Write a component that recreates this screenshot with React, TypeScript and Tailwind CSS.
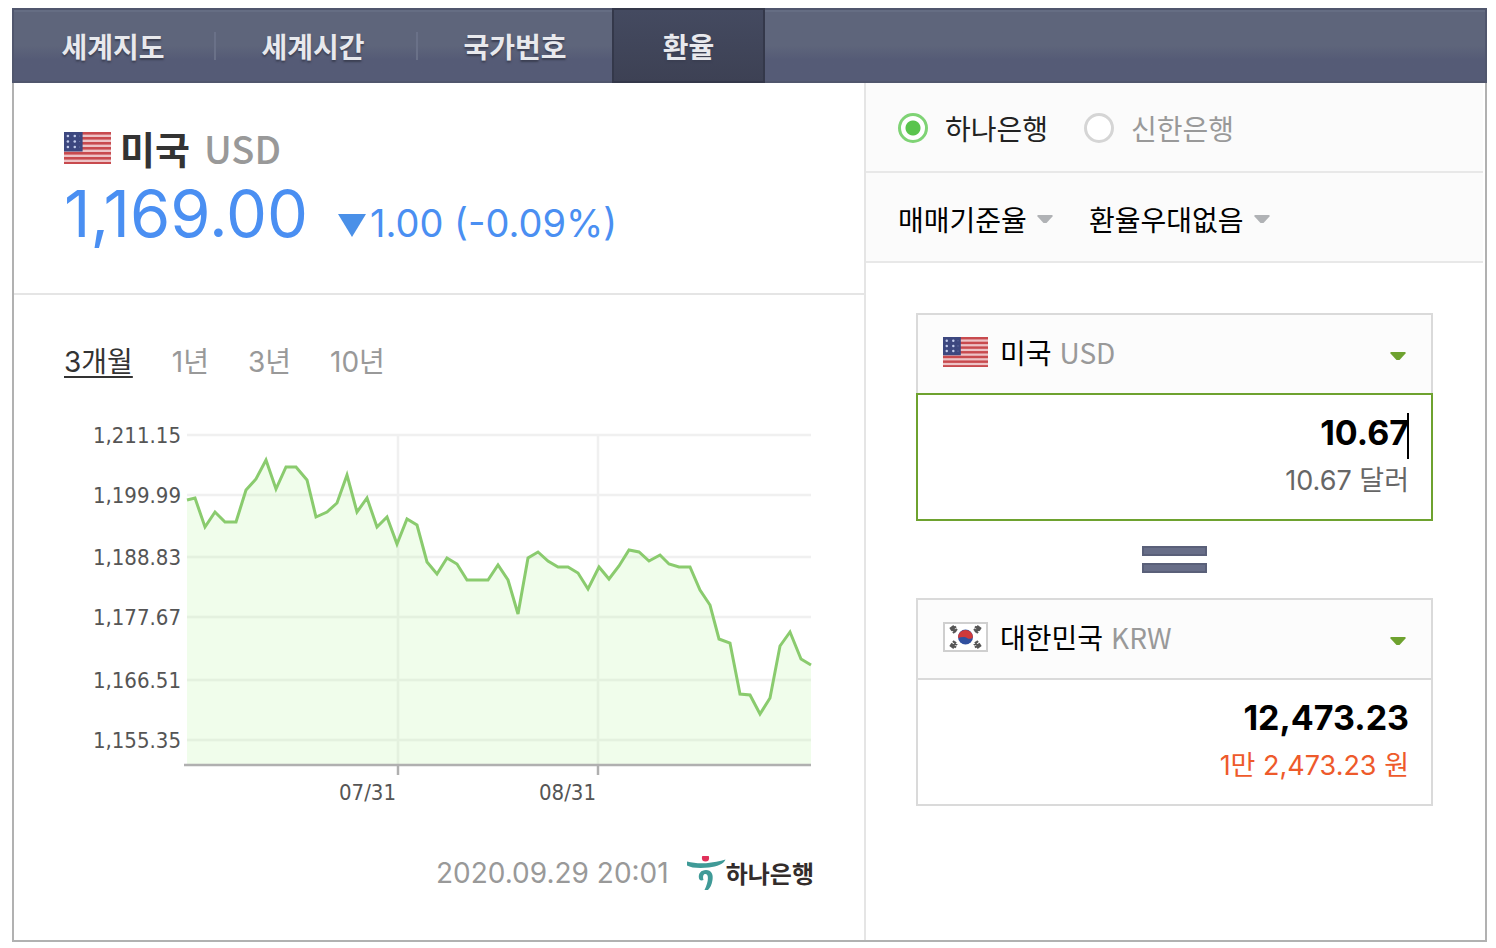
import { useState } from 'react'
import clsx from 'clsx'

interface CurrencyBoxProps {
  id: string
  name: string
  code: string
  flag: React.ReactNode
  value: string
  reading: string
  active?: boolean
  onChange: (value: string) => void
}

const tabs = [
  { label: '세계지도', className: 'w-[202px] pr-1' },
  { label: '세계시간', className: 'w-[202px] pr-2' },
  { label: '국가번호', className: 'w-[194px]' },
  { label: '환율', className: 'w-[153px]', active: true },
]

const periods = ['3개월', '1년', '3년', '10년']

const yLabels = [
  { y: 15, text: '1,211.15' },
  { y: 75, text: '1,199.99' },
  { y: 137, text: '1,188.83' },
  { y: 197, text: '1,177.67' },
  { y: 260, text: '1,166.51' },
  { y: 320, text: '1,155.35' },
]

const xLabels = [
  { x: 334, text: '07/31' },
  { x: 534, text: '08/31' },
]

const linePoints =
  '123,80 131,78 141,107 151,92 161,102 172,102 182,70 192,59 202,40 212,69 222,47 232,47 243,60 252,97 263,92 273,83 283,55 293,92 303,78 313,107 323,97 333,124 343,99 353,105 363,142 373,154 383,138 393,144 403,160 424,160 434,145 444,160 454,194 464,138 474,132 484,141 494,147 504,147 514,153 524,169 535,147 545,159 555,146 565,130 575,132 585,141 596,135 605,144 615,147 626,147 636,170 646,185 655,219 666,223 676,274 686,275 696,294 706,278 716,226 726,212 737,239 747,245'

function UsaFlag({ className }: { className?: string }) {
  return (
    <svg viewBox="0 0 48 32" preserveAspectRatio="none" className={className} aria-hidden="true">
      <rect width="48" height="32" fill="#edc3c6" />
      {[0, 5, 10, 15, 20, 25, 30].map((y) => (
        <rect key={y} y={y} width="48" height="2.6" fill="#c84a4e" />
      ))}
      <rect width="19" height="19.5" fill="#3c477f" />
      {[4, 9.5, 15].map((y) => (
        <g key={y} fill="#c3cdec">
          <circle cx="4" cy={y} r="1.3" />
          <circle cx="11" cy={y} r="1.3" />
          <circle cx="16" cy={y} r="0.6" fill="#6f7bad" />
        </g>
      ))}
    </svg>
  )
}

function KoreaFlag({ className }: { className?: string }) {
  return (
    <svg viewBox="0 0 45 30" className={className} aria-hidden="true">
      <rect x="1" y="1" width="43" height="28" fill="#fff" stroke="#cfcfcf" strokeWidth="2" />
      <circle cx="22.5" cy="15" r="7.5" fill="#31509f" />
      <path d="M15 16a7.5 7.500 0 1 1 15-1c-1 2-4 2.500-6 1s-6-1-9 0z" fill="#d0393b" />
      <g stroke="#555" strokeWidth="2.200">
        <path d="M7 7l4-3M8 8.500l5-4M10 11l4-4M8 5l5 5" />
        <path d="M38 7l-4-3M37 8.500l-5-4M35 11l-4-4M37 5l-5 5" />
        <path d="M7 23l4 3M8 21.500l5 4M10 19l4 4M8 25l5-5" />
        <path d="M38 23l-4 3M37 21.500l-5 4M35 19l-4 4M37 25l-5-5" />
      </g>
    </svg>
  )
}

function Caret({ className }: { className?: string }) {
  return (
    <svg viewBox="0 0 16 9" className={className} aria-hidden="true">
      <path d="M0.500 0h15v1.500L9.500 8h-3L0.500 1.500z" fill="currentColor" />
    </svg>
  )
}

function RateChart() {
  return (
    <svg viewBox="0 0 750 400" className="block w-[750px] max-w-full" role="img" aria-label="USD 3개월 환율">
      <g stroke="#f0f0f0" strokeWidth="2.500">
        {yLabels.map(({ y }) => (
          <line key={y} x1="123" y1={y} x2="747" y2={y} />
        ))}
        {xLabels.map(({ x }) => (
          <line key={x} x1={x} y1="15" x2={x} y2="345" />
        ))}
      </g>
      <polygon points={`${linePoints} 747,345 123,345`} fill="#b4f39b" fillOpacity="0.2" />
      <polyline points={linePoints} fill="none" stroke="#8acb6e" strokeWidth="3" />
      <line x1="120" y1="345" x2="747" y2="345" stroke="#b0b0b0" strokeWidth="2.500" />
      {xLabels.map(({ x }) => (
        <line key={x} x1={x} y1="345" x2={x} y2="355" stroke="#b0b0b0" strokeWidth="2.500" />
      ))}
      <g className="fill-[#555] font-['DejaVu_Sans_Condensed','Noto_Sans',sans-serif] text-[22px]">
        {yLabels.map(({ y, text }) => (
          <text key={y} x="117" y={y + 8} textAnchor="end">{text}</text>
        ))}
        {xLabels.map(({ x, text }) => (
          <text key={x} x={x - 2} y="380" textAnchor="end">{text}</text>
        ))}
      </g>
    </svg>
  )
}

function HanaLogo() {
  return (
    <a href="#hana" className="flex items-center">
      <svg viewBox="0 0 39 34" className="h-[34px] w-[39px]" aria-hidden="true">
        <circle cx="18.500" cy="2" r="3.600" fill="#e0305a" />
        <path d="M0 5.500c6 1.500 12 2.200 19 1.700S33 5 38.500 3.500C37 8 30 10.500 22 11.500 13 12.500 4 12 0 9.500z" fill="#3f9a97" />
        <path d="M12 22.500c-1-5 2-8.500 7-8.500 5.500 0 7.500 4.500 6.500 10-.8 5-2.500 8-4.500 10h-3.500c2-4 3.500-8.500 3.400-12 0-2.500-.8-4-2.600-4-2 0-2.800 2.500-1.800 6-2 1-4 .5-4.500-1.500z" fill="#3f9a97" />
      </svg>
      <span className="pt-1 text-[24px] leading-[34px] font-bold text-[#332c2b]">하나은행</span>
    </a>
  )
}

function CurrencyBox({ id, name, code, flag, value, reading, active, onChange }: CurrencyBoxProps) {
  return (
    <div>
      <div className="relative flex h-20 items-center border-2 border-b-0 border-[#dadada] bg-[#fcfcfc] px-[25px] pb-1">
        {flag}
        <span className="ml-3 text-[28px] leading-10 text-black">{name}</span>
        <span className="ml-2 text-[28px] leading-10 text-[#999]">{code}</span>
        <Caret className="mt-2 ml-auto h-[9px] w-4 text-[#6ea22f]" />
        <select
          aria-label={`${name} ${code}`}
          defaultValue={code}
          className="absolute inset-0 w-full cursor-pointer opacity-0"
        >
          <option value={code}>{name} {code}</option>
        </select>
      </div>
      <div
        className={clsx(
          "h-32 border-2 bg-white px-[22px] pt-3 text-right font-['Inter','Noto_Sans_CJK_KR',sans-serif]",
          active ? 'border-[#6ea22f]' : 'border-[#dadada]'
        )}
      >
        <div className="relative">
          <input
            id={id}
            type="text"
            aria-label={`${name} 금액`}
            value={value}
            onChange={(e) => onChange(e.target.value)}
            className="block h-[50px] w-full bg-transparent text-right text-[34px] font-bold text-black caret-transparent outline-none"
          />
          {active && <span className="absolute top-[6px] right-0 h-[46px] w-[2px] bg-black" />}
        </div>
        <p className={clsx('text-[27px] leading-[48px]', active ? 'text-[#666]' : 'text-[#ee5a2b]')}>{reading}</p>
      </div>
    </div>
  )
}

export default function App() {
  const [bank, setBank] = useState('hana')
  const [period, setPeriod] = useState('3개월')
  const [usd, setUsd] = useState('10.67')
  const [krw, setKrw] = useState('12,473.23')

  return (
    <div className="bg-white px-3 pt-2 pr-[9px] pb-[6px] font-['Noto_Sans_CJK_KR',sans-serif]">
      {/* 상단 탭 */}
      <nav className="flex h-[75px] border-2 border-[#50566d] bg-linear-to-b from-[#5e657b] from-50% to-[#555b76] to-70% shadow-[inset_0_2px_0_#656d83]">
        {tabs.map((tab, i) => (
          <a
            key={tab.label}
            href="#tab"
            className={clsx(
              'relative flex items-center justify-center text-[28px] leading-10 font-bold text-[#e8e9ed] [text-shadow:0_2px_2px_#3b3f52]',
              tab.className,
              tab.active && '-my-[2px] border-2 border-[#34384a] bg-linear-to-b from-[#444a60] to-[#3d4154]'
            )}
          >
            {tab.label}
            {i < 2 && <span className="absolute top-[22px] right-0 h-7 w-[2px] bg-[#6a7188]" />}
          </a>
        ))}
      </nav>

      <div className="flex border-2 border-t-0 border-[#b1b1b1]">
        <main className="min-w-0 flex-1">
          <section className="h-[212px] border-b-2 border-[#e5e5e5] px-[50px] pt-[39px]">
            <h1 className="flex h-[52px] items-center text-[38px] leading-[52px] font-bold text-[#333]">
              <UsaFlag className="mr-[9px] h-8 w-[47px]" />
              미국
              <span className="ml-[14px] font-medium text-[#999]">USD</span>
            </h1>
            <p className="flex items-baseline font-['Inter','Noto_Sans',sans-serif] leading-[80px] text-[#4a8ff2]">
              <strong className="text-[65px] font-normal">1,169.00</strong>
              <svg viewBox="0 0 28 23" className="-mb-[3px] ml-[30px] h-[23px] w-7" aria-hidden="true">
                <path d="M0 0h28L14 23z" fill="#4a90e8" />
              </svg>
              <span className="ml-1 text-[38px]">1.00 (-0.09%)</span>
            </p>
          </section>

          <section className="px-[50px] pt-[47px] pb-[46px] font-['Inter','Noto_Sans_CJK_KR',sans-serif]">
            <div className="flex gap-[39px]">
              {periods.map((item) => (
                <button
                  key={item}
                  type="button"
                  onClick={() => setPeriod(item)}
                  className={clsx(
                    'cursor-pointer text-[28px] leading-10',
                    period === item ? 'text-[#333] underline decoration-2 underline-offset-4' : 'text-[#999]'
                  )}
                >
                  {item}
                </button>
              ))}
            </div>
            <div className="mt-[38px]">
              <RateChart />
            </div>
            <div className="mt-8 flex h-[42px] items-center justify-end gap-[18px]">
              <time className="text-[28px] leading-[42px] text-[#999]">2020.09.29 20:01</time>
              <HanaLogo />
            </div>
          </section>
        </main>

        <aside className="w-[621px] border-l-2 border-[#e5e5e5] pr-[2px]">
          <div className="flex h-[90px] items-center border-b-2 border-[#e8e8e8] bg-[#fbfbfb] px-8 pt-[2px] text-[28px] leading-10">
            {[
              { id: 'hana', label: '하나은행' },
              { id: 'shinhan', label: '신한은행' },
            ].map(({ id, label }) => (
              <label
                key={id}
                className={clsx('mr-9 flex cursor-pointer items-center', bank === id ? 'text-[#222]' : 'text-[#999]')}
              >
                <input
                  type="radio"
                  name="bank"
                  checked={bank === id}
                  onChange={() => setBank(id)}
                  className="mr-[17px] h-[30px] w-[30px] appearance-none rounded-full border-[3px] border-[#d5d5d5] bg-white checked:border-[#7fd375] checked:bg-[radial-gradient(circle,#5ac44d_7px,#fff_8px)]"
                />
                {label}
              </label>
            ))}
          </div>
          <div className="flex h-[90px] items-center gap-9 border-b-2 border-[#e8e8e8] bg-[#fbfbfb] px-8 pt-1 text-[28px] leading-10 text-black">
            <div className="relative">
              <select aria-label="환율 기준" className="appearance-none bg-transparent pr-[26px]">
                <option>매매기준율</option>
              </select>
              <Caret className="pointer-events-none absolute top-4 right-0 h-[9px] w-4 text-[#b0b2b5]" />
            </div>
            <div className="relative">
              <select aria-label="환율 우대" className="appearance-none bg-transparent pr-[26px]">
                <option>환율우대없음</option>
              </select>
              <Caret className="pointer-events-none absolute top-4 right-0 h-[9px] w-4 text-[#b0b2b5]" />
            </div>
          </div>

          <div className="px-[50px] pt-[50px]">
            <CurrencyBox
              id="usd"
              name="미국"
              code="USD"
              flag={<UsaFlag className="h-[30px] w-[45px]" />}
              value={usd}
              reading="10.67 달러"
              active
              onChange={setUsd}
            />
            <div className="flex h-[77px] flex-col items-center justify-center gap-[7px]">
              <span className="h-[10px] w-[65px] border-2 border-[#5a6079] bg-[#686e88]" />
              <span className="h-[10px] w-[65px] border-2 border-[#5a6079] bg-[#686e88]" />
            </div>
            <CurrencyBox
              id="krw"
              name="대한민국"
              code="KRW"
              flag={<KoreaFlag className="h-[30px] w-[45px]" />}
              value={krw}
              reading="1만 2,473.23 원"
              onChange={setKrw}
            />
          </div>
        </aside>
      </div>
    </div>
  )
}
